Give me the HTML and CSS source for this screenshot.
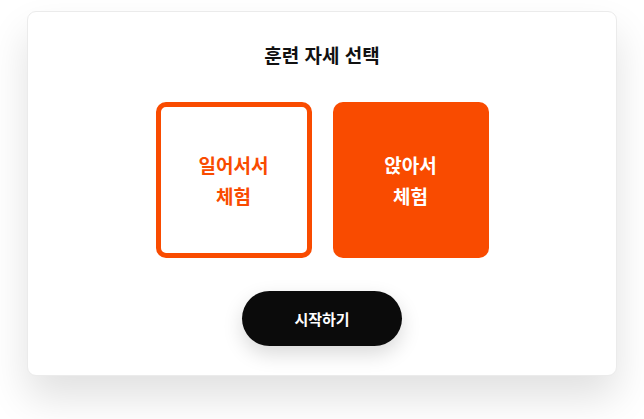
FILE: index.html
```html
<!DOCTYPE html>
<html lang="ko">
<head>
    <meta charset="UTF-8">
    <meta name="viewport" content="width=device-width, initial-scale=1.0">
    <title>훈련 자세 선택</title>
    <link rel="stylesheet" href="styles.css">
</head>
<body>
    <div class="cartao">
        <h1 class="titulo">훈련 자세 선택</h1>
        <div class="opcoes">
            <button class="opcao ativa">일어서서<br>체험</button>
            <button class="opcao cheia">앉아서<br>체험</button>
        </div>
        <button class="iniciar">시작하기</button>
    </div>
</body>
</html>
```

FILE: styles.css
```css
body {
    margin: 0;
    padding: 11px 0 43px 0;
    min-height: 100vh;
    box-sizing: border-box;
    background-color: #ffffff;
    font-family: "Noto Sans CJK KR", "Noto Sans", sans-serif;
}

.cartao {
    width: 588px;
    height: 363px;
    margin: 0 auto;
    box-sizing: content-box;
    border: 1px solid #ebebeb;
    border-radius: 9px;
    background-color: #ffffff;
    box-shadow: 0 22px 40px rgba(0, 0, 0, 0.12);
    display: flex;
    flex-direction: column;
    align-items: center;
}

.titulo {
    margin: 30px 0 0 0;
    font-size: 19px;
    line-height: 26px;
    font-weight: 700;
    color: #111111;
}

.opcoes {
    display: flex;
    gap: 21px;
    margin-top: 34px;
}

.opcao {
    width: 156px;
    height: 156px;
    border-radius: 10px;
    font-family: inherit;
    font-size: 19px;
    line-height: 31px;
    font-weight: 700;
    cursor: pointer;
}

.ativa {
    background-color: #ffffff;
    border: 5px solid #f94b00;
    color: #f94b00;
}

.cheia {
    background-color: #f94b00;
    border: none;
    color: #ffffff;
}

.iniciar {
    margin-top: 33px;
    width: 160px;
    height: 55px;
    border: none;
    border-radius: 28px;
    background-color: #0b0b0b;
    color: #ffffff;
    font-family: inherit;
    font-size: 15px;
    font-weight: 700;
    box-shadow: 0 8px 20px rgba(0, 0, 0, 0.15);
}
```
